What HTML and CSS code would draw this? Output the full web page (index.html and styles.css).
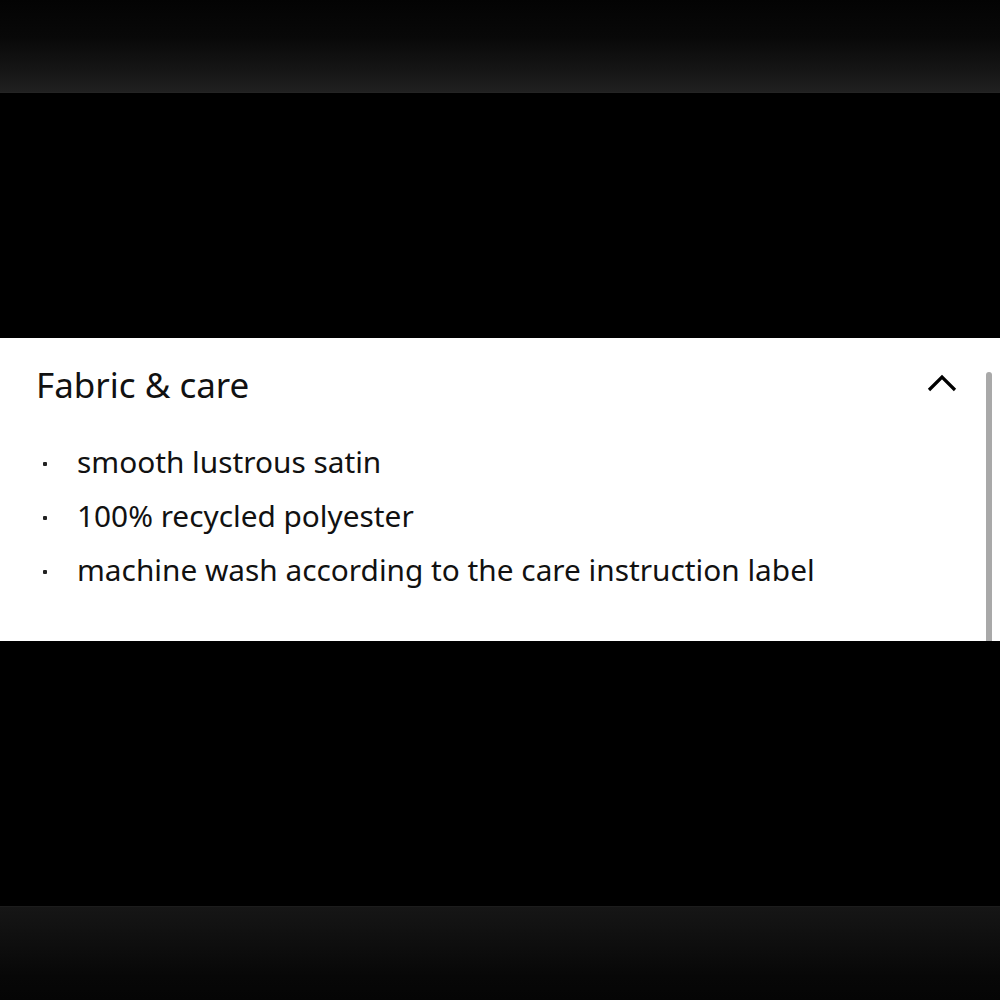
FILE: index.html
```html
<!DOCTYPE html>
<html lang="en">
<head>
<meta charset="utf-8">
<link rel="stylesheet" href="styles.css">
</head>
<body>
<div class="screen">
  <div class="top-bar"></div>
  <div class="gap-top"></div>
  <section class="panel">
    <div class="panel-inner">
      <div class="header">
        <h2 class="title">Fabric &amp; care</h2>
        <svg class="chevron" width="30" height="20" viewBox="0 0 30 20">
          <path d="M2 17 L15 4 L28 17" fill="none" stroke="#000" stroke-width="3.2" stroke-linecap="butt" stroke-linejoin="miter"/>
        </svg>
      </div>
      <ul class="list">
        <li class="item"><span class="dot"></span><span class="text">smooth lustrous satin</span></li>
        <li class="item"><span class="dot"></span><span class="text">100% recycled polyester</span></li>
        <li class="item"><span class="dot"></span><span class="text">machine wash according to the care instruction label</span></li>
      </ul>
    </div>
    <div class="scroll-track"><div class="scroll-thumb"></div></div>
  </section>
  <div class="gap-bottom"></div>
  <div class="bottom-bar"></div>
</div>
</body>
</html>
```
FILE: styles.css
```css
html, body {
  margin: 0;
  padding: 0;
  background: #000;
}
.screen {
  width: 1000px;
  height: 1000px;
  display: flex;
  flex-direction: column;
  background: #000;
  font-family: "Noto Sans", "Liberation Sans", sans-serif;
}
.top-bar {
  height: 93px;
  background: linear-gradient(to bottom, #030303 0%, #080808 40%, #171717 80%, #202020 100%);
  border-bottom: 1px solid #242424;
  box-sizing: border-box;
}
.gap-top {
  height: 245px;
}
.panel {
  height: 303px;
  background: #fff;
  display: flex;
}
.panel-inner {
  flex: 1;
  padding: 0 0 0 36px;
}
.header {
  height: 92px;
  display: flex;
  align-items: center;
  justify-content: space-between;
  padding-right: 29px;
}
.title {
  margin: 0;
  font-weight: 400;
  font-size: 35px;
  color: #111;
  letter-spacing: 0;
}
.chevron {
  display: block;
  margin-top: -2px;
}
.list {
  list-style: none;
  margin: 0;
  padding: 4px 0 0;
}
.item {
  height: 54px;
  display: flex;
  align-items: center;
  color: #111;
  font-size: 29.8px;
}
.dot {
  width: 4px;
  height: 4px;
  background: #222;
  border-radius: 1px;
  margin-left: 7px;
  margin-right: 30px;
  margin-top: 6px;
}
.scroll-track {
  width: 14px;
  display: flex;
  flex-direction: column;
  padding-top: 34px;
  box-sizing: border-box;
}
.scroll-thumb {
  width: 6px;
  flex: 1;
  background: #a9a9a9;
  border-radius: 3px 3px 0 0;
}
.gap-bottom {
  height: 265px;
}
.bottom-bar {
  flex: 1;
  background: linear-gradient(to bottom, #161616 0%, #0e0e0e 40%, #070707 75%, #050505 100%);
  border-top: 1px solid #1c1c1c;
}
```
